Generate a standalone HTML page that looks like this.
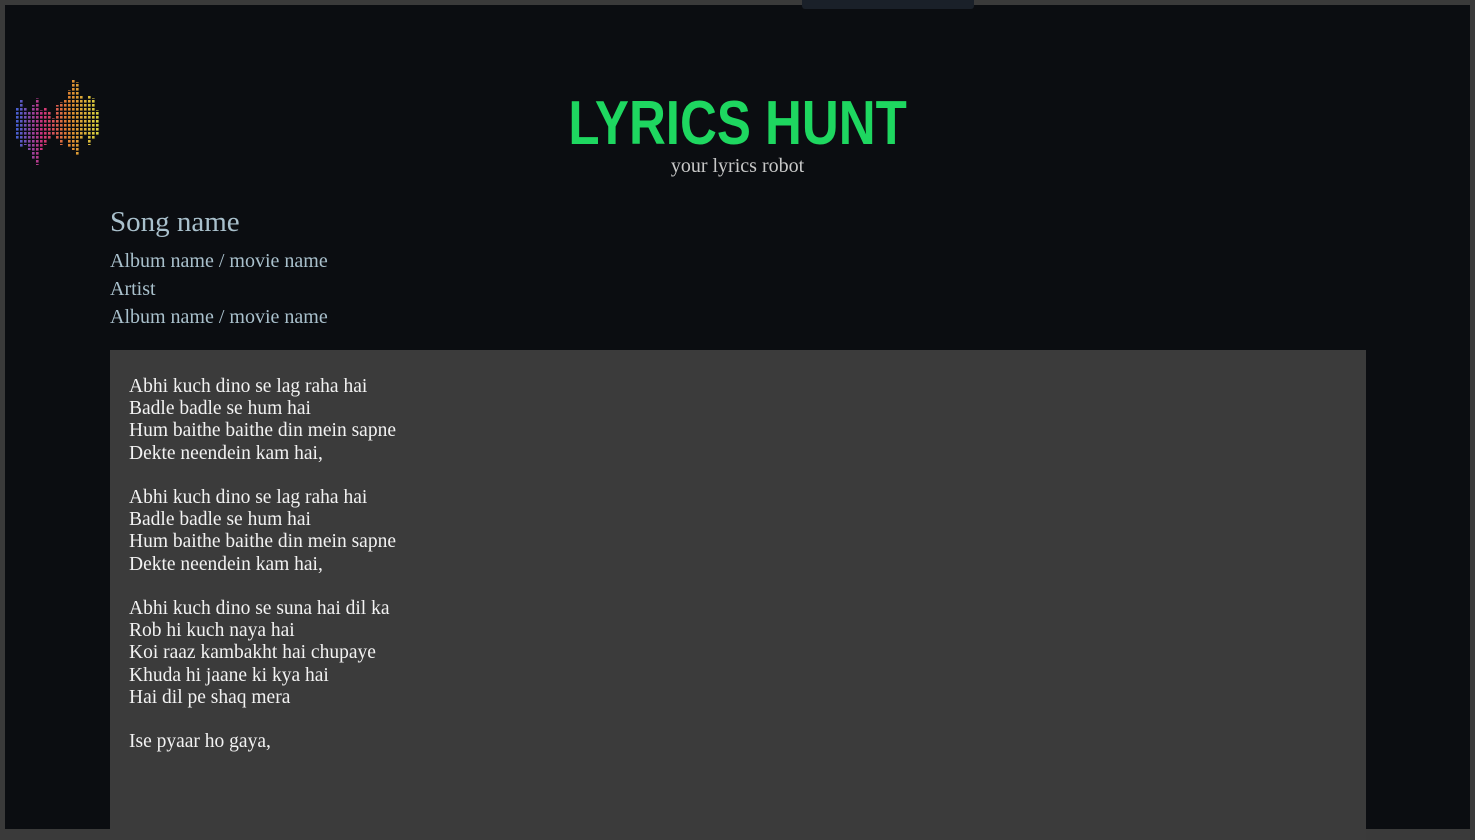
<!DOCTYPE html>
<html><head><meta charset="utf-8"><style>
html,body{margin:0;padding:0}
body{width:1475px;height:835px;background:#3a3a3a;overflow:hidden;position:relative;font-family:"Liberation Serif",serif}
.main{position:absolute;left:5px;top:5px;width:1465px;height:824px;background:#0b0d11;overflow:hidden}
.tab{position:absolute;left:802px;top:0;width:172px;height:9px;background:#1a2029;border-radius:0 0 3px 3px}
h1{position:absolute;left:0;width:1475px;top:89px;margin:0;text-align:center;font-family:"Liberation Sans",sans-serif;font-weight:bold;font-size:62px;color:#1ed760;line-height:70px;transform:scaleX(0.823);transform-origin:738px 0}
.sub{position:absolute;left:0;width:1475px;top:155px;text-align:center;font-size:20px;color:#c8c8c8}
.song{position:absolute;left:110px;top:206px;font-size:29px;color:#a9c0cc}
.meta{position:absolute;left:110px;top:247px;font-size:20px;color:#a9c0cc;line-height:28px}
.box{position:absolute;left:110px;top:350px;width:1256px;height:490px;background:#3b3b3b}
.ly{position:absolute;left:129px;top:376px;font-size:19.5px;line-height:22.2px;color:#f2f2f2;white-space:pre}
</style></head><body>
<div class="main"></div>
<div class="tab"></div>
<svg style="position:absolute;left:16px;top:78px" width="90" height="92" viewBox="16 78 90 92">
<defs>
<linearGradient id="g" x1="18" x2="100" y1="0" y2="0" gradientUnits="userSpaceOnUse">
<stop offset="0" stop-color="#4a5fd0"/><stop offset="0.3" stop-color="#d0307a"/><stop offset="0.6" stop-color="#e08030"/><stop offset="1" stop-color="#d8d840"/></linearGradient>
<pattern id="p" x="0" y="0" width="4" height="4" patternUnits="userSpaceOnUse"><rect width="2.6" height="2.6" fill="#fff"/></pattern>
<mask id="m"><rect x="0" y="0" width="200" height="200" fill="url(#p)"/></mask>
</defs>
<g fill="url(#g)" mask="url(#m)">
<rect x="16" y="108" width="4" height="32"/><rect x="20" y="100" width="4" height="48"/>
<rect x="24" y="108" width="4" height="37"/><rect x="28" y="112" width="4" height="38"/>
<rect x="32" y="105" width="4" height="55"/><rect x="36" y="98" width="4" height="67"/>
<rect x="40" y="110" width="4" height="40"/><rect x="44" y="108" width="4" height="37"/>
<rect x="48" y="112" width="4" height="28"/><rect x="52" y="118" width="4" height="17"/>
<rect x="56" y="105" width="4" height="35"/><rect x="60" y="102" width="4" height="43"/>
<rect x="64" y="100" width="4" height="40"/><rect x="68" y="90" width="4" height="58"/>
<rect x="72" y="80" width="4" height="70"/><rect x="76" y="82" width="4" height="73"/>
<rect x="80" y="95" width="4" height="45"/><rect x="84" y="100" width="4" height="35"/>
<rect x="88" y="96" width="4" height="49"/><rect x="92" y="98" width="4" height="42"/>
<rect x="96" y="110" width="4" height="25"/>
</g></svg>
<h1>LYRICS HUNT</h1>
<div class="sub">your lyrics robot</div>
<div class="song">Song name</div>
<div class="meta">Album name / movie name<br>Artist<br>Album name / movie name</div>
<div class="box"></div>
<div class="ly">Abhi kuch dino se lag raha hai
Badle badle se hum hai
Hum baithe baithe din mein sapne
Dekte neendein kam hai,

Abhi kuch dino se lag raha hai
Badle badle se hum hai
Hum baithe baithe din mein sapne
Dekte neendein kam hai,

Abhi kuch dino se suna hai dil ka
Rob hi kuch naya hai
Koi raaz kambakht hai chupaye
Khuda hi jaane ki kya hai
Hai dil pe shaq mera

Ise pyaar ho gaya,</div>
</body></html>
